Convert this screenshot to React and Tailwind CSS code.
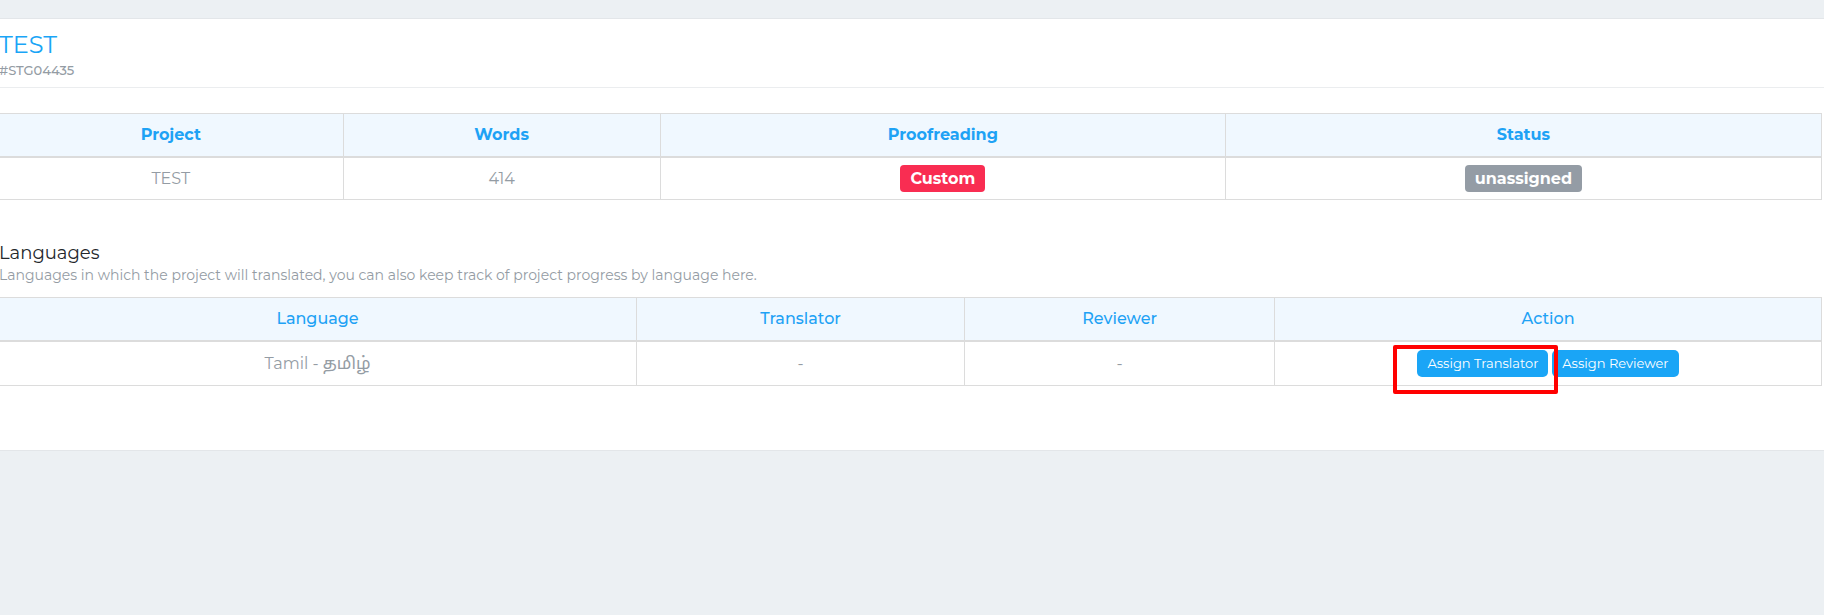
const projectColumns = [
  { label: 'Project', width: 'w-[18.9%]' },
  { label: 'Words', width: 'w-[17.4%]' },
  { label: 'Proofreading', width: 'w-[31%]' },
  { label: 'Status', width: 'w-[32.7%]' },
];

const languageColumns = [
  { label: 'Language', width: 'w-[35%]' },
  { label: 'Translator', width: 'w-[18%]' },
  { label: 'Reviewer', width: 'w-[17%]' },
  { label: 'Action', width: 'w-[30%]' },
];

function DataTable({ columns, weight, children }) {
  return (
    <table className="w-full table-fixed border-separate border-spacing-0 border-t border-[#dcdcdc] text-center">
      <thead>
        <tr className="bg-[#f0f8ff]">
          {columns.map((column) => (
            <th
              key={column.label}
              scope="col"
              className={`${column.width} ${weight} h-11 border-r border-b-2 border-[#dcdcdc] p-0 text-base text-[#1ea2f5]`}
            >
              {column.label}
            </th>
          ))}
        </tr>
      </thead>
      <tbody>{children}</tbody>
    </table>
  );
}

function Cell({ children }) {
  return <td className="border-r border-b border-[#dcdcdc] p-0">{children}</td>;
}

function Badge({ color, children }) {
  return (
    <span className={`${color} inline-block rounded px-[10px] align-middle text-base leading-[27px] font-bold text-white`}>
      {children}
    </span>
  );
}

function ActionButton({ children }) {
  return (
    <button type="button" className="rounded-[5px] bg-[#1aa5f6] px-[10px] text-[13px] leading-[27px] text-white">
      {children}
    </button>
  );
}

export default function App() {
  return (
    <div className="min-h-screen overflow-x-hidden bg-[#ecf0f3] pt-[18px] font-[Montserrat,Inter,'Noto_Sans_Tamil','Noto_Sans',sans-serif] text-[#949ca4]">
      <main className="-ml-px border-y border-[#e3e6e9] bg-white pb-16">
        <header className="border-b border-[#ebedef] pt-[10px] pb-2">
          <h1 className="text-2xl leading-8 text-[#1aa5f6]">TEST</h1>
          <p className="text-[13px] leading-[18px] font-medium">#STG04435</p>
        </header>

        <section className="pt-[25px] pr-[2px]">
          <DataTable columns={projectColumns} weight="font-bold">
            <tr className="h-[42px]">
              <Cell>TEST</Cell>
              <Cell>414</Cell>
              <Cell>
                <Badge color="bg-[#f92d52]">Custom</Badge>
              </Cell>
              <Cell>
                <Badge color="bg-[#949ca5]">unassigned</Badge>
              </Cell>
            </tr>
          </DataTable>
        </section>

        <section className="pt-10 pr-[2px]">
          <h2 className="text-lg leading-[26px] text-[#23272b]">Languages</h2>
          <p className="mb-[13px] text-sm leading-[18px]">
            Languages in which the project will translated, you can also keep track of project progress by language here.
          </p>
          <DataTable columns={languageColumns} weight="font-medium">
            <tr className="h-11">
              <Cell>
                Tamil - <span lang="ta" className="text-[17px] leading-6">தமிழ்</span>
              </Cell>
              <Cell>-</Cell>
              <Cell>-</Cell>
              <Cell>
                <div className="flex items-center justify-center gap-1">
                  <div className="relative flex">
                    <ActionButton>Assign Translator</ActionButton>
                    <span className="pointer-events-none absolute -top-[5px] -right-[10px] -bottom-[17px] -left-6 z-10 rounded-[2px] border-4 border-[#ff0000]" />
                  </div>
                  <ActionButton>Assign Reviewer</ActionButton>
                </div>
              </Cell>
            </tr>
          </DataTable>
        </section>
      </main>
    </div>
  );
}
